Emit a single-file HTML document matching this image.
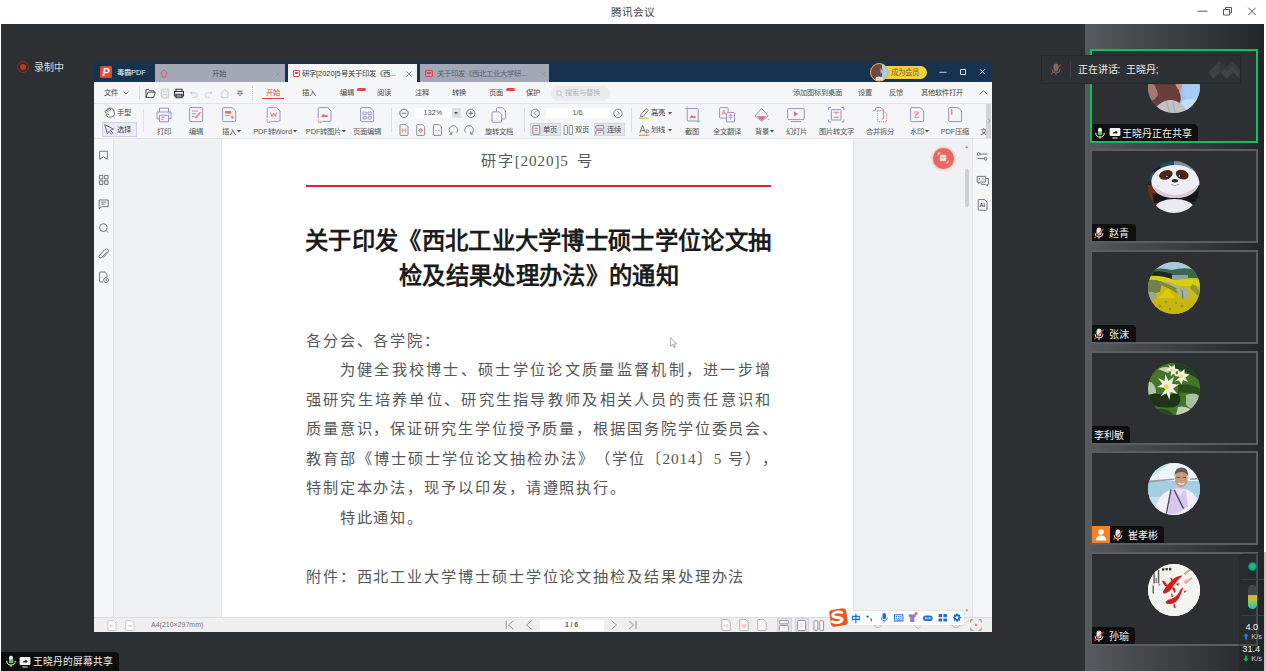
<!DOCTYPE html>
<html lang="zh-CN">
<head>
<meta charset="utf-8">
<title>腾讯会议</title>
<style>
html,body{margin:0;padding:0;}
body{width:1266px;height:671px;overflow:hidden;background:#fff;position:relative;font-family:"Liberation Sans",sans-serif;text-spacing-trim:space-all;}
.a{position:absolute;}
.t{position:absolute;white-space:nowrap;line-height:1;}
.m{position:absolute;white-space:nowrap;line-height:1;font-size:7.3px;color:#4a4a4a;top:89px;}
.l{position:absolute;white-space:nowrap;line-height:1;font-size:7.3px;color:#555;top:128px;text-align:center;}
.n{font-family:"Liberation Serif",serif;letter-spacing:0.85px;}
.dl{position:absolute;left:305px;width:466px;white-space:nowrap;line-height:1;font-family:"Liberation Sans",sans-serif;font-size:15.2px;letter-spacing:1.7px;color:#555;text-align:justify;text-align-last:justify;}
.tile{position:absolute;left:1090px;width:164px;height:90px;border:2px solid #5b5e61;background:#2d3033;}
.nm{position:absolute;left:0;bottom:0;height:17px;background:#0f0f0f;border-top-right-radius:4px;color:#f0f0f0;font-size:10px;line-height:19px;white-space:nowrap;}
svg{position:absolute;overflow:visible;}
</style>
</head>
<body>
<div class="t" style="left:611px;top:7px;font-size:10.7px;color:#444;">腾讯会议</div>
<svg style="left:1190px;top:0" width="76" height="24" viewBox="0 0 76 24"><g fill="none" stroke="#555" stroke-width="1"><path d="M7.5 11.2H17.5"/><path d="M33.5 9.5h6v5.5h-6z M35.5 9.5v-2h6v5.5h-2"/><path d="M58.3 7.7l7.4 7.4M65.7 7.7l-7.4 7.4"/></g></svg>
<div class="a" style="left:1px;top:24px;width:1263px;height:647px;background:#2d3033;"></div>
<div class="a" style="left:1085px;top:24px;width:179px;height:647px;background:linear-gradient(to right,#575a5e 0%,#494c4f 25%,#3d4043 50%,#303336 75%,#232629 100%);"></div>
<div class="a" style="left:17px;top:61px;width:10px;height:10px;border:1px solid #8a2c1f;border-radius:50%;"></div><div class="a" style="left:20px;top:64px;width:6px;height:6px;background:#c4381f;border-radius:50%;"></div><div class="t" style="left:33.5px;top:63px;font-size:10px;color:#dadada;">录制中</div>
<div class="a" style="left:94px;top:62px;width:898px;height:570px;background:#f5f6f7;"></div>
<div class="a" style="left:94px;top:62px;width:898px;height:20px;background:#17324f;"></div>
<div class="a" style="left:99.5px;top:66px;width:12px;height:12px;background:#e9463a;border-radius:1.5px;"></div><div class="t" style="left:102.5px;top:66.5px;font-size:10.5px;font-weight:bold;font-style:italic;color:#fff;">P</div><div class="t" style="left:117px;top:68.5px;font-size:7.4px;color:#f0f3f7;">毒霸PDF</div>
<div class="a" style="left:155px;top:64.2px;width:130px;height:17.8px;background:#a2a8b6;"></div><svg style="left:160px;top:69px" width="8" height="9" viewBox="0 0 8 9"><path d="M4 0.8L7.3 4.2H6V8H2V4.2H0.7Z" fill="none" stroke="#e0575a" stroke-width="0.9"/></svg><div class="t" style="left:211.5px;top:70px;font-size:7.4px;color:#4a5160;">开始</div><svg style="left:275px;top:71px" width="6" height="6" viewBox="0 0 6 6"><path d="M0.5 0.5l5 5M5.5 0.5l-5 5" stroke="#8f95a3" stroke-width="0.8"/></svg>
<div class="a" style="left:288px;top:64.2px;width:129px;height:17.8px;background:#f5f6f7;"></div><div class="a" style="left:292.5px;top:69.5px;width:7px;height:7px;border:1px solid #e0474b;border-radius:1px;box-sizing:border-box;"></div><div class="a" style="left:294.5px;top:71.8px;width:3.5px;height:2px;background:#e0474b;"></div><div class="t" style="left:302px;top:70px;font-size:7.4px;color:#333;">研字[2020]5号关于印发《西...</div><svg style="left:405.5px;top:71px" width="6" height="6" viewBox="0 0 6 6"><path d="M0.5 0.5l5 5M5.5 0.5l-5 5" stroke="#777" stroke-width="0.8"/></svg>
<div class="a" style="left:420px;top:64.2px;width:129px;height:17.8px;background:#a2a8b6;"></div><div class="a" style="left:425px;top:69.5px;width:7.5px;height:7px;border:1px solid #e0474b;border-radius:1px;box-sizing:border-box;"></div><div class="a" style="left:427px;top:71.8px;width:3.5px;height:2px;background:#e0474b;"></div><div class="t" style="left:437px;top:70px;font-size:7.4px;color:#5b6170;">关于印发《西北工业大学研...</div><svg style="left:539.5px;top:71px" width="6" height="6" viewBox="0 0 6 6"><path d="M0.5 0.5l5 5M5.5 0.5l-5 5" stroke="#8f95a3" stroke-width="0.8"/></svg>
<div class="a" style="left:880px;top:66px;width:46.5px;height:13px;background:#f7cf45;border-radius:6.5px;"></div><div class="t" style="left:891px;top:68.5px;font-size:7.5px;color:#8a5a10;">成为会员</div><svg style="left:870.3px;top:62.6px" width="18.6" height="18.6" viewBox="0 0 18.6 18.6"><defs><clipPath id="mb"><circle cx="9.3" cy="9.3" r="8.7"/></clipPath></defs><g clip-path="url(#mb)"><rect width="18.6" height="18.6" fill="#a9c9f0"/><path d="M0 0H11Q13 5 12 9Q12.500 13 11 18.600H0Z" fill="#6c4a43"/><path d="M10.500 5Q12.500 6 12 9.500L10.500 10.500Z" fill="#d9b3a3"/><path d="M6 14Q10 12.500 14 15V18.600H5Z" fill="#d8dbe2"/><path d="M12.500 2Q17 4 18.600 8V0H12Z" fill="#c7def6"/></g><circle cx="9.3" cy="9.3" r="8.800" fill="none" stroke="#e9b62f" stroke-width="1"/></svg><svg style="left:938px;top:66px" width="52" height="12" viewBox="0 0 52 12"><g fill="none" stroke="#dfe5ec" stroke-width="0.9"><path d="M1.5 6.3H8.5"/><path d="M22.5 3.5h5v5h-5z" stroke-width="1"/><path d="M42 3.2l5 5M47 3.2l-5 5" stroke-width="1"/></g></svg>
<div class="a" style="left:94px;top:103px;width:898px;height:1px;background:#e2e3e6;"></div>
<div class="m" style="left:104px;">文件</div><svg style="left:123px;top:91px" width="6" height="4" viewBox="0 0 6 4"><path d="M0.6 0.6L3 3L5.4 0.6" fill="none" stroke="#555" stroke-width="0.8"/></svg><div class="a" style="left:138.5px;top:86px;width:1px;height:14px;background:#dcdde0;"></div><svg style="left:145px;top:87.5px" width="100" height="11" viewBox="0 0 100 11"><g fill="none" stroke-width="0.9"><path d="M1 9.5V1.5H4L5 2.8H9V4.2M1 9.5L2.8 4.2H10.3L8.6 9.5Z" stroke="#444"/><path d="M16.5 1.2H23.5V9.8H16.5Z M18 1.2V4H22V1.2 M18 9.8V6.5H22V9.8" stroke="#c9cacd"/><path d="M31 3.5V1.2H37V3.5 M29.5 3.5H38.5V8H29.5Z M31 6.3H37V9.8H31Z" stroke="#333" stroke-width="1.1"/><path d="M47 3.2L45.5 5L47.5 6.3 M45.8 4.9H50.2A2.2 2.2 0 0 1 50.2 9.3H47.5" stroke="#c9cacd"/><path d="M65.5 3.2L67 5L65 6.3 M66.7 4.9H62.3A2.2 2.2 0 0 0 62.3 9.3H65" stroke="#c9cacd"/><path d="M75.5 5.5L79.8 1.5L84 5.5 M76.8 4.5V9.6H82.8V4.5" stroke="#c9cacd"/><path d="M92.5 3.2H97.5 M92.5 5L95 7.6L97.5 5Z" stroke="#555" stroke-width="0.8"/></g></svg><div class="a" style="left:251.5px;top:86px;width:1px;height:14px;border-left:1px dotted #cfd0d3;"></div>
<div class="m" style="left:265.5px;color:#e0474b;">开始</div><div class="a" style="left:262px;top:98.3px;width:21.5px;height:1.2px;background:#e0474b;"></div><div class="m" style="left:302px;">插入</div><div class="m" style="left:339.5px;">编辑</div><div class="a" style="left:357px;top:87.5px;width:9px;height:3.2px;background:#e8454b;border-radius:1.5px;"></div><div class="m" style="left:377px;">阅读</div><div class="m" style="left:414.5px;">注释</div><div class="m" style="left:451.5px;">转换</div><div class="m" style="left:488.5px;">页面</div><div class="a" style="left:506px;top:87.5px;width:9px;height:3.2px;background:#e8454b;border-radius:1.5px;"></div><div class="m" style="left:525.5px;">保护</div>
<div class="a" style="left:551px;top:85.5px;width:59px;height:15px;background:#ebecee;border-radius:7.5px;"></div><svg style="left:556px;top:89.5px" width="7" height="7" viewBox="0 0 7 7"><circle cx="3" cy="3" r="2.3" fill="none" stroke="#b9babd" stroke-width="0.8"/><path d="M4.7 4.7L6.5 6.5" stroke="#b9babd" stroke-width="0.8"/></svg><div class="m" style="left:565px;color:#b4b5b9;">搜索与替换</div>
<div class="m" style="left:793px;color:#555;">添加图标到桌面</div><div class="m" style="left:857.5px;color:#555;">设置</div><div class="m" style="left:888.5px;color:#555;">反馈</div><div class="m" style="left:921px;color:#444;">其他软件打开</div><svg style="left:979px;top:90px" width="9" height="5" viewBox="0 0 9 5"><path d="M0.7 4.3L4.5 0.8L8.3 4.3" fill="none" stroke="#555" stroke-width="0.9"/></svg>
<div class="a" style="left:94px;top:138px;width:898px;height:1px;background:#e4e5e8;"></div>
<svg style="left:103.5px;top:106.8px" width="11.5" height="11" viewBox="0 0 11.5 11"><path d="M2.600 6.200Q0.600 5.600 0.900 4.300Q1.300 3.200 2.800 3.700Q2.600 2.200 3.900 1.900Q4.600 0.700 5.900 1.200Q7.200 0.500 8 1.700Q9.600 2 9.700 3.600Q10.800 5.400 10.500 7.400Q10 9.800 7.400 10.100Q4.400 10.400 2.800 9.300Q1.600 8.400 2.600 7.400Q3.400 7 4.400 7.400 M2.800 3.700L4.200 4.600 M3.900 1.900L5.200 3.600 M5.900 1.200L6.600 3.200" fill="none" stroke="#555" stroke-width="0.800" stroke-linecap="round"/></svg><div class="t" style="left:117px;top:109.3px;font-size:7.3px;color:#444;">手型</div><div class="a" style="left:101.5px;top:122px;width:35.4px;height:14.6px;background:#ebecf4;border:1px solid #cfd1e6;box-sizing:border-box;"></div><svg style="left:104.3px;top:123.6px" width="10.5" height="11" viewBox="0 0 10.5 11"><path d="M0.800 0.700L9.400 5L6.300 6.200L8.800 9L7.400 10.200L4.900 7.400L3.300 9.800Z" fill="none" stroke="#555" stroke-width="0.8" stroke-linejoin="round"/></svg><div class="t" style="left:117px;top:126px;font-size:7.3px;color:#444;">选择</div><div class="a" style="left:142.5px;top:109px;width:1px;height:23px;background:#e1e2e7;"></div>
<svg style="left:155.5px;top:106.5px" width="16" height="16" viewBox="0 0 16 16"><g fill="none" stroke="#8d88c2" stroke-width="0.9"><path d="M3.5 5V1.2H12.5V5 M1 5H15V11.8H12.5 M3.5 11.8H1V5"/><path d="M3.5 8.3H12.5V14.8H3.5Z"/><path d="M5.5 10.3H8.5 M5.5 12.3H7.5" stroke="#ee6a6f"/><path d="M12.3 6.8H13.3" stroke="#8d88c2"/></g></svg><div class="l" style="left:123.5px;width:80px;color:#555;">打印</div><svg style="left:189px;top:106.5px" width="14.5" height="15.5" viewBox="0 0 14.5 15.5"><g fill="none" stroke="#8d88c2" stroke-width="0.9"><rect x="0.6" y="0.6" width="13" height="14" rx="1.2"/><path d="M3 4H9 M3 6.7H7 M3 9.4H5.5" stroke="#ee6a6f"/><path d="M6.5 11L11.5 5.2" stroke="#ee6a6f" stroke-width="1.3"/></g></svg><div class="l" style="left:156px;width:80px;color:#555;">编辑</div><svg style="left:222px;top:106.5px" width="14.5" height="15.5" viewBox="0 0 14.5 15.5"><g fill="none" stroke="#8d88c2" stroke-width="0.9"><path d="M0.6 1.8Q0.6 0.6 1.8 0.6H10L13.6 4V13.4Q13.6 14.6 12.4 14.6H1.8Q0.6 14.6 0.6 13.4Z"/><rect x="3" y="4" width="6" height="2.6" fill="#ee6a6f" stroke="none"/><path d="M3 8.6H7.5 M8.5 10.2H12 M10.2 8.4V12" stroke="#ee6a6f"/></g></svg><div class="l" style="left:191.5px;width:80px;color:#555;">插入<svg style="position:static;display:inline-block;vertical-align:1px;margin-left:0.8px" width="4" height="2.6" viewBox="0 0 4 2.6"><path d="M0 0H4L2 2.6Z" fill="#555"/></svg></div><svg style="left:265.5px;top:106.5px" width="15" height="16" viewBox="0 0 15 16"><g fill="none" stroke="#8d88c2" stroke-width="0.9"><path d="M1.2 11V1.8Q1.2 0.6 2.4 0.6H10.6L14 4V13.2Q14 14.4 12.8 14.4H5"/><path d="M4.5 5.5L6 9.5L7.6 6.2L9.2 9.5L10.7 5.5" stroke="#ee6a6f" stroke-width="1"/><path d="M1.2 12V15.2H4 M3 14.2L4.2 15.2L3 16.2" stroke="#ee6a6f" stroke-width="0.7"/></g></svg><div class="l" style="left:235px;width:80px;color:#555;">PDF转Word<svg style="position:static;display:inline-block;vertical-align:1px;margin-left:0.8px" width="4" height="2.6" viewBox="0 0 4 2.6"><path d="M0 0H4L2 2.6Z" fill="#555"/></svg></div><svg style="left:316.5px;top:106.5px" width="15" height="16" viewBox="0 0 15 16"><g fill="none" stroke="#8d88c2" stroke-width="0.9"><path d="M1.2 11V1.8Q1.2 0.6 2.4 0.6H10.6L14 4V13.2Q14 14.4 12.8 14.4H5"/><path d="M4 10L6.5 6.5L8.3 8.8L9.6 7.5L11.3 10Z" fill="#ee6a6f" stroke="none"/><path d="M1.2 12V15.2H4 M3 14.2L4.2 15.2L3 16.2" stroke="#ee6a6f" stroke-width="0.7"/></g></svg><div class="l" style="left:286px;width:80px;color:#555;">PDF转图片<svg style="position:static;display:inline-block;vertical-align:1px;margin-left:0.8px" width="4" height="2.6" viewBox="0 0 4 2.6"><path d="M0 0H4L2 2.6Z" fill="#555"/></svg></div><svg style="left:360px;top:106.5px" width="14.5" height="15.5" viewBox="0 0 14.5 15.5"><g fill="none" stroke="#8d88c2" stroke-width="0.9"><path d="M0.6 1.8Q0.6 0.6 1.8 0.6H10L13.6 4V13.4Q13.6 14.6 12.4 14.6H1.8Q0.6 14.6 0.6 13.4Z"/><path d="M3 5H6.2V7.6H3Z M8 5H11.2V7.6H8Z M3 9.4H6.2V12H3Z M8 9.4H11.2V12H8Z" stroke-width="0.8"/></g></svg><div class="l" style="left:327px;width:80px;color:#555;">页面编辑</div><div class="a" style="left:390.5px;top:108px;width:1px;height:24px;background:#dcdde1;"></div>
<svg style="left:399px;top:107.5px" width="78" height="11" viewBox="0 0 78 11"><g fill="none" stroke="#555" stroke-width="0.8"><circle cx="5" cy="5.3" r="4.2"/><path d="M2.8 5.3H7.2"/><circle cx="71.8" cy="5.3" r="4.2"/><path d="M69.6 5.3H74 M71.8 3.1V7.5"/></g></svg><div class="a" style="left:414.5px;top:107.5px;width:37.5px;height:10.5px;background:#fff;"></div><div class="a" style="left:452px;top:107.5px;width:8.5px;height:10.5px;background:#dfe0e4;"></div><div class="t" style="left:423.5px;top:109.3px;font-size:7.3px;color:#555;">132%</div><svg style="left:454.2px;top:111.6px" width="4" height="2.6" viewBox="0 0 4 2.6"><path d="M0 0H4L2 2.6Z" fill="#555"/></svg><svg style="left:399px;top:123.5px" width="78" height="12" viewBox="0 0 78 12"><g fill="none" stroke="#777" stroke-width="0.8"><path d="M1 1.2Q1 0.6 1.6 0.6H6.8L9 2.8V10.8Q9 11.4 8.4 11.4H1.6Q1 11.4 1 10.8Z"/><path d="M3.4 4.5V8.5 M6.6 4.5V8.5 M4.2 6.5H5.8" stroke="#ee6a6f"/><path d="M17.7 1.2Q17.7 0.6 18.3 0.6H23.5L25.7 2.8V10.8Q25.7 11.4 25.1 11.4H18.3Q17.7 11.4 17.7 10.8Z"/><circle cx="21.7" cy="6.5" r="1.6" stroke="#ee6a6f"/><path d="M21.7 4V9 M19.2 6.5H24.2" stroke="#ee6a6f" stroke-width="0.5"/><path d="M34.4 1.2Q34.4 0.6 35 0.6H40.2L42.4 2.8V10.8Q42.4 11.4 41.8 11.4H35Q34.4 11.4 34.4 10.8Z"/><path d="M36.2 6.5H37.6 M39.2 6.5H40.6" stroke="#ee6a6f"/><path d="M52.5 9.8A4.3 4.3 0 1 1 57.8 8.6 M52.8 7.6V10.2H50.4" stroke="#666"/><path d="M72 9.8A4.3 4.3 0 1 0 66.7 8.6 M71.7 7.6V10.2H74.1" stroke="#666"/></g></svg><svg style="left:491px;top:106.5px" width="15.5" height="16" viewBox="0 0 15.5 16"><g fill="none" stroke="#8d88c2" stroke-width="0.9"><path d="M5.5 4.5V1.8Q5.5 0.6 6.7 0.6H11.5L14.6 3.8V10.8Q14.6 12 13.4 12H11"/><path d="M1 6Q1 4.8 2.2 4.8H8L10.6 7.4V14Q10.6 15.2 9.4 15.2H2.2Q1 15.2 1 14Z"/></g></svg><div class="l" style="left:459px;width:80px;color:#555;">旋转文档</div><div class="a" style="left:524px;top:108px;width:1px;height:24px;background:#dcdde1;"></div>
<svg style="left:530px;top:107.5px" width="94" height="11" viewBox="0 0 94 11"><g fill="none" stroke="#666" stroke-width="0.8"><circle cx="5.2" cy="5.3" r="4.2"/><path d="M6 3.3L4 5.3L6 7.3"/><circle cx="88" cy="5.3" r="4.2"/><path d="M87.2 3.3L89.2 5.3L87.2 7.3"/></g></svg><div class="a" style="left:545.5px;top:107.5px;width:64px;height:10.5px;background:#fff;"></div><div class="t" style="left:545.5px;width:64px;text-align:center;top:109.3px;font-size:7.3px;color:#555;">1/6</div><div class="a" style="left:529.5px;top:122.5px;width:31px;height:13px;background:#e3e4ea;border:1px solid #d3d4dc;box-sizing:border-box;"></div><div class="a" style="left:593.5px;top:122.5px;width:31.5px;height:13px;background:#e3e4ea;border:1px solid #d3d4dc;box-sizing:border-box;"></div><svg style="left:532px;top:124.5px" width="74" height="10" viewBox="0 0 74 10"><g fill="none" stroke="#777" stroke-width="0.8"><rect x="0.8" y="0.6" width="7" height="8.8" rx="0.8"/><path d="M2.8 3.5H5.8 M2.8 5.5H5.8" stroke="#ee6a6f"/><rect x="32" y="0.6" width="3.4" height="8.8" rx="0.6"/><rect x="37.2" y="0.6" width="3.4" height="8.8" rx="0.6"/><rect x="63.8" y="0.6" width="8" height="3.4" rx="0.6"/><path d="M63.8 9.4V6.2Q63.8 5.6 64.4 5.6H71.2Q71.8 5.6 71.8 6.2V9.4"/><path d="M66 7.6H69" stroke="#ee6a6f"/></g></svg><div class="t" style="left:543px;top:126px;font-size:7.3px;color:#444;">单页</div><div class="t" style="left:575px;top:126px;font-size:7.3px;color:#444;">双页</div><div class="t" style="left:607px;top:126px;font-size:7.3px;color:#444;">连续</div><div class="a" style="left:631px;top:108px;width:1px;height:24px;background:#dcdde1;"></div>
<svg style="left:638px;top:106.5px" width="12" height="30" viewBox="0 0 12 30"><g fill="none" stroke="#555" stroke-width="0.8"><path d="M3 7.5L8 1.5L10.3 3.4L5.3 9.3L2.6 9.8Z"/><path d="M1 11.3H10.5" stroke="#e8cf3a" stroke-width="1.4"/><path d="M1.8 26L4.6 18.5L7.4 26 M2.8 23.6H6.4"/><path d="M8.6 26V22.6Q10.8 22.6 10.8 24.3Q10.8 26 8.6 26Z" stroke-width="0.7"/><path d="M1 28.3H11" stroke="#f0a12a" stroke-width="1.4"/></g></svg><div class="t" style="left:650.5px;top:109.3px;font-size:7.3px;color:#444;">高亮</div><svg style="left:667.5px;top:112px" width="4" height="2.6" viewBox="0 0 4 2.6"><path d="M0 0H4L2 2.6Z" fill="#555"/></svg><div class="t" style="left:650.5px;top:126px;font-size:7.3px;color:#444;">划线</div><svg style="left:667.5px;top:128.7px" width="4" height="2.6" viewBox="0 0 4 2.6"><path d="M0 0H4L2 2.6Z" fill="#555"/></svg><svg style="left:684.5px;top:105.5px" width="16" height="17" viewBox="0 0 16 17"><g fill="none" stroke="#8d88c2" stroke-width="0.9"><rect x="2.2" y="2.5" width="11" height="12.5" rx="1"/><path d="M0.4 2.5H2.2 M2.2 0.6V2.5 M13.2 15H15.2 M13.2 15V16.8" stroke-width="0.8"/><path d="M4.5 12L6.8 8.8L8.4 10.8L9.6 9.6L11.2 12Z" fill="#ee6a6f" stroke="none"/></g></svg><div class="l" style="left:652px;width:80px;color:#555;">截图</div><svg style="left:719px;top:106.5px" width="16.5" height="15.5" viewBox="0 0 16.5 15.5"><g fill="none" stroke="#8d88c2" stroke-width="0.9"><rect x="0.6" y="0.6" width="8.5" height="10.5" rx="1"/><path d="M3 8L4.8 3L6.6 8 M3.7 6.3H5.9" stroke="#ee6a6f" stroke-width="0.8"/><rect x="7.6" y="5.6" width="8" height="9.3" rx="1" fill="#f5f6f7"/><path d="M9.6 8.3H13.6 M9.6 10.3H13.6 M11.6 7V12.6" stroke-width="0.7"/></g></svg><div class="l" style="left:686.5px;width:80px;color:#555;">全文翻译</div><svg style="left:754px;top:106.5px" width="16" height="16" viewBox="0 0 16 16"><g fill="none" stroke="#8d88c2" stroke-width="0.9"><path d="M1 8.8L7.6 1.4L14.2 8.8L7.6 14.4Z"/><path d="M2.5 9.2L7.6 13.6L12.8 9.2Z" fill="#ee6a6f" stroke="none"/><path d="M14.3 11.2Q15.4 12.8 14.3 13.3Q13.2 12.8 14.3 11.2Z" fill="#ee6a6f" stroke="none"/></g></svg><div class="l" style="left:724.5px;width:80px;color:#555;">背景<svg style="position:static;display:inline-block;vertical-align:1px;margin-left:0.8px" width="4" height="2.6" viewBox="0 0 4 2.6"><path d="M0 0H4L2 2.6Z" fill="#555"/></svg></div><svg style="left:787px;top:107.5px" width="18" height="14.5" viewBox="0 0 18 14.5"><g fill="none" stroke="#8d88c2" stroke-width="0.9"><rect x="0.6" y="0.6" width="16.6" height="11" rx="1.2"/><path d="M7 3.6L11.2 6.1L7 8.6Z" fill="#ee6a6f" stroke="none"/><path d="M4 13.6H14"/></g></svg><div class="l" style="left:756px;width:80px;color:#555;">幻灯片</div><svg style="left:827.5px;top:106.5px" width="16.5" height="15.5" viewBox="0 0 16.5 15.5"><g fill="none" stroke="#8d88c2" stroke-width="0.9"><path d="M0.6 3V0.6H3 M13.5 0.6H15.9V3 M15.9 12.5V14.9H13.5 M3 14.9H0.6V12.5"/><rect x="3.4" y="2.6" width="9.6" height="10.4" rx="0.6"/><path d="M5.4 5.2H11 M8.2 5.2V7.6" stroke="#ee6a6f" stroke-width="0.8"/><path d="M5.2 10.2H11.2"/></g></svg><div class="l" style="left:796px;width:80px;color:#555;">图片转文字</div><svg style="left:872px;top:106.5px" width="15.5" height="15.5" viewBox="0 0 15.5 15.5"><g fill="none" stroke="#8d88c2" stroke-width="0.9"><path d="M3.4 3.4V1.6Q3.4 0.6 4.4 0.6H9L11.6 3.2V11Q11.6 12 10.6 12H9.8"/><path d="M5.6 3.6H11L14.6 6.8V13.8Q14.6 14.8 13.6 14.8H6.6Q5.6 14.8 5.6 13.8Z" stroke="#ee6a6f" stroke-dasharray="1.2 0.8"/><path d="M0.8 4.4Q0.8 3.4 1.8 3.4H3.4" /></g></svg><div class="l" style="left:839.5px;width:80px;color:#555;">合并拆分</div><svg style="left:910px;top:106.5px" width="14.5" height="15.5" viewBox="0 0 14.5 15.5"><g fill="none" stroke="#8d88c2" stroke-width="0.9"><path d="M0.6 1.8Q0.6 0.6 1.8 0.6H10L13.6 4V13.4Q13.6 14.6 12.4 14.6H1.8Q0.6 14.6 0.6 13.4Z"/><path d="M4 5H8.4L4.6 10.4H9.4 M5 7.8L8.6 6.6" stroke="#ee6a6f" stroke-width="0.8"/></g></svg><div class="l" style="left:879.5px;width:80px;color:#555;">水印<svg style="position:static;display:inline-block;vertical-align:1px;margin-left:0.8px" width="4" height="2.6" viewBox="0 0 4 2.6"><path d="M0 0H4L2 2.6Z" fill="#555"/></svg></div><svg style="left:948px;top:106.5px" width="14.5" height="15.5" viewBox="0 0 14.5 15.5"><g fill="none" stroke="#8d88c2" stroke-width="0.9"><path d="M0.6 1.8Q0.6 0.6 1.8 0.6H10L13.6 4V13.4Q13.6 14.6 12.4 14.6H1.8Q0.6 14.6 0.6 13.4Z"/><path d="M3.6 2.2V7.6 M2.6 3.4H4.6 M2.6 5.2H4.6 M2.6 7H4.6" stroke="#ee6a6f" stroke-width="0.8"/></g></svg><div class="l" style="left:915px;width:80px;color:#555;">PDF压缩</div><div class="t" style="left:980px;top:128px;font-size:7.3px;color:#555;width:5.5px;overflow:hidden;">文</div><div class="a" style="left:985.5px;top:104px;width:5.5px;height:34px;background:#d3d4d7;"></div><svg style="left:986.5px;top:117.5px" width="4" height="6" viewBox="0 0 4 6"><path d="M0.8 0.6L3.2 3L0.8 5.4" fill="none" stroke="#8a8b8f" stroke-width="0.7"/></svg>
<div class="a" style="left:113px;top:139px;width:859px;height:478px;background:#f0f1f3;"></div><div class="a" style="left:113px;top:139px;width:1px;height:478px;background:#e3e4e7;"></div><div class="a" style="left:972px;top:139px;width:1px;height:478px;background:#e3e4e7;"></div><div class="a" style="left:221px;top:139px;width:633px;height:478px;background:#fff;border-left:1px solid #e2e3e5;border-right:1px solid #e2e3e5;box-sizing:border-box;"></div>
<svg style="left:98px;top:150px" width="12" height="135" viewBox="0 0 12 135"><g fill="none" stroke="#555" stroke-width="0.8"><path d="M1.6 1.5H9.4V11L5.5 8L1.6 11Z" transform="translate(0,0) scale(1,0.85)"/><path d="M1.4 25.4H4.8V29H1.4Z M6.6 25.4H10V29H6.6Z M1.4 30.8H4.8V34.4H1.4Z M6.6 30.8H10V34.4H6.6Z"/><path d="M1.2 50H10.2V56.6H4L1.2 58.6Z M3.2 52.2H8.2 M3.2 54.2H6.6"/><circle cx="5.4" cy="77.6" r="3.9"/><path d="M8.2 80.4L10 82.4"/><path d="M9.6 101.4L4.6 106.8Q3.4 108 2.3 107Q1.3 105.9 2.4 104.7L7.4 99.3Q9.2 97.5 10.7 99Q12 100.5 10.3 102.300L5.600 107.400" transform="translate(-0.800,0.500)"/><path d="M1.6 122.6Q1.6 122 2.2 122H6.6L9 124.4V127 M1.6 122.6V131.4Q1.6 132 2.2 132H5"/><circle cx="8" cy="130" r="2.4"/><path d="M8 128.8V130.2H9"/></g></svg>
<div class="t" style="left:481.3px;top:152.8px;font-size:15.2px;letter-spacing:1.7px;word-spacing:2.5px;color:#555;">研字<span class="n">[2020]5</span> 号</div>
<div class="a" style="left:305.5px;top:185px;width:465.5px;height:2px;background:#e8212b;"></div>
<div style="position:absolute;white-space:nowrap;line-height:1;font-weight:bold;font-size:23.3px;color:#1c1c1c;text-align:justify;text-align-last:justify;left:305px;top:230px;width:466px;">关于印发《西北工业大学博士硕士学位论文抽</div>
<div style="position:absolute;white-space:nowrap;line-height:1;font-weight:bold;font-size:23.3px;color:#1c1c1c;text-align:justify;text-align-last:justify;left:399px;top:265px;width:279.6px;">检及结果处理办法》的通知</div>
<div class="dl" style="top:332.6px;left:305.8px;width:135.2px;">各分会、各学院：</div>
<div class="dl" style="top:362.15px;left:339.6px;width:432.2px;">为健全我校博士、硕士学位论文质量监督机制，进一步增</div>
<div class="dl" style="top:391.7px;left:305.8px;width:466px;">强研究生培养单位、研究生指导教师及相关人员的责任意识和</div>
<div class="dl" style="top:421.25px;left:305.8px;width:473.2px;">质量意识，保证研究生学位授予质量，根据国务院学位委员会、</div>
<div class="dl" style="top:450.8px;left:305.8px;width:473.2px;">教育部《博士硕士学位论文抽检办法》（学位〔<span class="n">2014</span>〕<span class="n">5</span> 号），</div>
<div class="dl" style="top:480.35px;left:305.8px;width:321.1px;">特制定本办法，现予以印发，请遵照执行。</div>
<div class="dl" style="top:509.9px;left:339.6px;width:84.5px;">特此通知。</div>
<div class="dl" style="top:569px;left:305.8px;width:439.4px;">附件：西北工业大学博士硕士学位论文抽检及结果处理办法</div>
<svg style="left:670px;top:337px" width="8" height="12" viewBox="0 0 8 12"><path d="M0.6 0.6V9.2L2.6 7.4L4 10.6L5.2 10L3.8 7H6.6Z" fill="#fff" stroke="#888" stroke-width="0.7"/></svg>
<div class="a" style="left:932.5px;top:147.5px;width:21px;height:21px;border-radius:50%;background:#e8685d;box-shadow:0 0 2px 1px rgba(232,104,93,0.35);"></div><svg style="left:937px;top:152px" width="12" height="12" viewBox="0 0 12 12"><g fill="none" stroke="#fbe3e0" stroke-width="0.8"><rect x="3.2" y="3.2" width="5.6" height="5.6" fill="#fbe3e0"/><path d="M4.6 5L6 6.6L7.4 5" stroke="#e8685d"/><path d="M1 3.4V1H3.4 M11 8.6V11H8.6"/></g></svg><div class="a" style="left:964.5px;top:168.5px;width:4.5px;height:38.5px;background:#cfcfd1;border-radius:2.2px;"></div><div class="t" style="left:964.6px;top:144.5px;font-size:4.5px;color:#999;">▲</div><div class="t" style="left:964.6px;top:609px;font-size:4.5px;color:#999;">▼</div>
<svg style="left:976px;top:150px" width="14" height="62" viewBox="0 0 14 62"><g fill="none" stroke="#555" stroke-width="0.8"><circle cx="2.6" cy="4" r="1.4"/><path d="M4 4H11.6"/><circle cx="9.6" cy="8.6" r="1.4"/><path d="M1.4 8.6H8.2"/><path d="M1.2 26.4H9.4V32H4.4L2.6 33.6V32H1.2Z"/><path d="M10.2 28.6H12.4V34.4H11.4V36L9.6 34.4H5.6V33"/><path d="M3.6 28V29.6 M6.8 28V29.6" stroke-width="0.9"/><path d="M2.2 50.2Q2.2 49.6 2.8 49.6H8.4L11 52.2V59.6Q11 60.2 10.4 60.2H2.8Q2.2 60.2 2.2 59.6Z"/></g></svg><div class="t" style="left:979.4px;top:203.2px;font-size:5.6px;font-weight:bold;color:#444;">Ai</div>
<div class="a" style="left:94px;top:616.5px;width:898px;height:15.5px;background:#efeff0;border-top:1px solid #dcdde0;box-sizing:border-box;"></div><svg style="left:107px;top:619.5px" width="30" height="11" viewBox="0 0 30 11"><g fill="none" stroke="#bbb" stroke-width="0.8"><path d="M0.8 1.2Q0.8 0.6 1.4 0.6H6.6L9 3V9.8Q9 10.4 8.4 10.4H1.4Q0.8 10.4 0.8 9.8Z" fill="#fff"/><path d="M3 6H6.6 M4 5L3 6L4 7"/><path d="M18.8 1.2Q18.8 0.6 19.4 0.6H24.6L27 3V9.8Q27 10.4 26.4 10.4H19.4Q18.8 10.4 18.8 9.8Z" fill="#fff"/><path d="M21 6H24.6 M23.6 5L24.6 6L23.6 7"/></g></svg><div class="t" style="left:151px;top:621.3px;font-size:7px;color:#777;">A4(210×297mm)</div>
<svg style="left:505px;top:620px" width="134" height="10" viewBox="0 0 134 10"><g fill="none" stroke="#8a8a8a" stroke-width="0.9"><path d="M1.2 0.8V9.2 M8.2 0.8L3.6 5L8.2 9.2"/><path d="M26.6 0.8L21.6 5L26.6 9.2"/><path d="M106.6 0.8L111.6 5L106.6 9.2"/><path d="M124 0.8L128.6 5L124 9.2 M131 0.8V9.2"/></g></svg><div class="a" style="left:539.5px;top:620px;width:64px;height:10.5px;background:#fff;"></div><div class="t" style="left:539.5px;width:64px;text-align:center;top:622px;font-size:6.8px;font-weight:bold;color:#555;">1 / 6</div>
<svg style="left:721px;top:619px" width="110" height="12" viewBox="0 0 110 12"><g fill="none" stroke="#9a9a9f" stroke-width="0.8"><path d="M0.8 1.2Q0.8 0.6 1.4 0.6H6.8L9.2 3V10.8Q9.2 11.4 8.6 11.4H1.4Q0.8 11.4 0.8 10.8Z" fill="#fff"/><path d="M3.4 5V8.6 M6.6 5V8.6 M4.2 6.8H5.8" stroke="#f0a0a3" stroke-width="0.7"/><path d="M18.8 1.2Q18.8 0.6 19.4 0.6H24.8L27.2 3V10.8Q27.2 11.4 26.6 11.4H19.4Q18.8 11.4 18.8 10.8Z" fill="#fff"/><circle cx="23" cy="6.8" r="1.7" stroke="#f0a0a3" stroke-width="0.7"/><path d="M23 4.4V9.2 M20.6 6.8H25.4" stroke="#f0a0a3" stroke-width="0.5"/><path d="M36.8 1.2Q36.8 0.6 37.4 0.6H42.8L45.2 3V10.8Q45.2 11.4 44.6 11.4H37.4Q36.8 11.4 36.8 10.8Z" fill="#fff"/><path d="M38.8 6.8H40.2 M41.8 6.8H43.2" stroke="#f0a0a3" stroke-width="0.7"/></g></svg><div class="a" style="left:776.5px;top:618px;width:15px;height:13.5px;background:#e4e5ea;border:1px solid #d2d3da;box-sizing:border-box;"></div><div class="a" style="left:794.5px;top:618px;width:14.5px;height:13.5px;background:#e4e5ea;border:1px solid #d2d3da;box-sizing:border-box;"></div><svg style="left:778px;top:619.5px" width="50" height="11" viewBox="0 0 50 11"><g fill="none" stroke="#808086" stroke-width="0.85"><rect x="1.4" y="0.6" width="9" height="3.2" rx="0.6" fill="#fff"/><path d="M1.4 10.4V6.2Q1.4 5.6 2 5.6H9.8Q10.4 5.6 10.4 6.2V10.4" fill="#fff"/><path d="M4.4 8H7.4" stroke="#f0a0a3"/><rect x="19.6" y="0.6" width="8" height="9.8" rx="0.8" fill="#fff"/><path d="M22 4H25.4 M22 6.2H25.4" stroke="#f0a0a3" stroke-width="0.7"/><rect x="36" y="0.8" width="3.8" height="9.6" rx="0.7" fill="#fff"/><rect x="41.8" y="0.8" width="3.8" height="9.6" rx="0.7" fill="#fff"/></g></svg>
<svg style="left:868px;top:617px" width="100" height="15" viewBox="0 0 100 15"><g fill="none" stroke="#a9a9ad" stroke-width="0.8"><circle cx="10" cy="6" r="4.6"/><path d="M47.6 9.6L50 11.6L52.4 9.6"/><circle cx="88" cy="6" r="4.6"/></g></svg><svg style="left:970px;top:619px" width="12" height="12" viewBox="0 0 12 12"><g fill="none" stroke="#777" stroke-width="0.8"><path d="M0.8 3.4V0.8H3.4 M8.6 0.8H11.2V3.4 M11.2 8.6V11.2H8.6 M3.4 11.2H0.8V8.6"/><circle cx="6" cy="6" r="0.9" fill="#e8454b" stroke="none"/></g></svg>
<div class="a" style="left:846px;top:610.7px;width:117.5px;height:14.3px;background:#fdfdfe;border-radius:2px;box-shadow:0 0 1.5px rgba(0,0,0,0.25);"></div><div class="a" style="left:829.5px;top:608.8px;width:17px;height:16.5px;background:#f0551f;border-radius:3px;transform:rotate(-9deg);"></div><svg style="left:829px;top:608.5px" width="17" height="16.5" viewBox="0 0 17 16.5"><path d="M13.6 4.200Q9 1.800 5.200 3.800Q2.600 5.600 5.400 7.400Q8.200 8.600 11.400 9.400Q14.400 10.800 11.600 12.800Q7.400 14.600 2.800 11.800" fill="none" stroke="#fff" stroke-width="2.700" stroke-linecap="round" transform="rotate(-9 8.500 8.250)"/></svg><div class="t" style="left:850.5px;top:613.6px;font-size:9.5px;font-weight:bold;color:#1e6fd9;">中</div><svg style="left:864px;top:612.4px" width="98" height="12" viewBox="0 0 98 12"><g fill="#1e6fd9" stroke="none"><circle cx="3.6" cy="4.6" r="1.2"/><path d="M6.6 6.2Q8.6 6.8 7.8 9.4L6.8 9Q7.2 7.6 6.2 7.4Z"/><rect x="18.4" y="1" width="3.6" height="6.4" rx="1.8"/><path d="M16.8 5.6Q16.8 9 20.2 9Q23.6 9 23.6 5.6H22.8Q22.8 8.2 20.2 8.2Q17.6 8.2 17.6 5.6Z M19.8 9H20.6V10.6H19.8Z"/><path d="M30 2.2H39.4V9.6H30Z M31 3.2V8.6H38.4V3.2Z M31.8 4H33V5H31.8Z M34 4H35.2V5H34Z M36.2 4H37.4V5H36.2Z M31.8 5.8H33V6.8H31.8Z M34 5.8H35.2V6.8H34Z M36.2 5.8H37.4V6.8H36.2Z M32.6 7.4H36.8V8.2H32.6Z"/><path d="M44.4 3L47 2Q48.2 3.6 49.6 2L52.2 3L51.4 5.4L50.4 5V10H46.2V5L45.2 5.4Z" fill="#8d7bd6"/><circle cx="52" cy="1.6" r="1.3" fill="#f0551f"/><rect x="59" y="3.4" width="9.6" height="5.6" rx="2.8"/><path d="M61.2 5.2H62.4V7.2H61.2Z M65.2 5.2H66.4V7.2H65.2Z M62.6 5.8H65V6.6H62.6Z" fill="#fff"/><path d="M74.6 2H78.2V5.2H74.6Z M79.4 2H83V5.2H79.4Z M74.6 6.4H78.2V9.6H74.6Z M79.4 6.4H83V9.6H79.4Z"/><path d="M93 1L94.2 2.6L96.2 2.4L96 4.4L97.6 5.6L96 6.8L96.2 8.8L94.2 8.6L93 10.2L91.8 8.6L89.8 8.8L90 6.8L88.4 5.6L90 4.4L89.8 2.4L91.8 2.6Z"/><circle cx="93" cy="5.6" r="1.4" fill="#fff"/></g></svg>
<div class="tile" style="top:49px;border-color:#0bc15f;"><svg style="left:56.2px;top:9.5px" width="52" height="52" viewBox="0 0 52 52"><defs><clipPath id="c1"><circle cx="26" cy="26" r="26"/></clipPath><filter id="b1" x="-10%" y="-10%" width="120%" height="120%"><feGaussianBlur stdDeviation="0.7"/></filter></defs><g clip-path="url(#c1)"><rect width="52" height="52" fill="#8c86a0"/><g filter="url(#b1)"><rect width="52" height="52" fill="#9cc3f2"/><path d="M32 20Q40 30 34 52H52V20Z" fill="#a4ccf6"/><path d="M34 40Q44 36 52 40V52H30Z" fill="#bfe0f8"/><path d="M0 0H30Q36 22 31 30Q35 38 30 46L8 48L0 40Z" fill="#6b3d39"/><path d="M0 20Q8 22 10 34Q6 40 2 40L0 36Z" fill="#a47a6e"/><path d="M26 20H34Q35 26 32 31Q28 26 26 20Z" fill="#c79488"/><path d="M8 46Q16 38 24 39Q32 40 38 48L36 52H12Z" fill="#c3c3c7"/><path d="M18 40L22 52M25 40L27 52" stroke="#aeaeb4" stroke-width="1.5"/></g></g></svg><div class="nm" style="width:106px;border-top-right-radius:5px;"><svg style="left:2px;top:2.5px" width="12" height="13" viewBox="0 0 12 13"><g fill="none" stroke="#f2f2f2" stroke-width="1"><rect x="4" y="0.8" width="4" height="7.4" rx="2" fill="#f2f2f2" stroke="none"/><path d="M4 4.2H8V6.2Q8 8.2 6 8.2Q4 8.2 4 6.2Z" fill="#3fe03a" stroke="none"/><path d="M1.8 5.8Q1.8 10 6 10Q10.2 10 10.2 5.8 M6 10V12"/></g></svg><svg style="left:16.5px;top:3px" width="12" height="12" viewBox="0 0 12 12"><rect x="0.6" y="1" width="10.8" height="8" rx="1.2" fill="#f4f4f4"/><path d="M3.4 11H8.6" stroke="#f4f4f4" stroke-width="1"/><path d="M3.6 6.6Q4.4 4.6 6.6 4.6V3.6L8.8 5.4L6.6 7.2V6.2Q5 6.2 3.6 6.6Z" fill="#222"/></svg><span style="position:absolute;left:30px;top:0;font-size:10px;">王晓丹正在共享</span></div></div>
<div class="tile" style="top:149px;"><svg style="left:56.2px;top:9.5px" width="52" height="52" viewBox="0 0 52 52"><defs><clipPath id="c2"><circle cx="26" cy="26" r="26"/></clipPath><filter id="b2" x="-10%" y="-10%" width="120%" height="120%"><feGaussianBlur stdDeviation="0.7"/></filter></defs><g clip-path="url(#c2)"><rect width="52" height="52" fill="#3a3538"/><g filter="url(#b2)"><rect width="52" height="52" fill="#20262c"/><path d="M0 0H26V20H0Z" fill="#1f4962"/><path d="M26 0H52V24H26Z" fill="#7f909e"/><path d="M0 24H22V46H0Z" fill="#66301f"/><path d="M4 32Q26 36 50 30L52 40Q30 44 6 42Z" fill="#19191c"/><circle cx="9" cy="8" r="4" fill="#222"/><ellipse cx="27.3" cy="20.5" rx="24" ry="16.5" fill="#efeff3"/><path d="M4 24Q27 44 50 24Q46 37 27.3 37Q8 37 4 24Z" fill="#d9c9d6"/><ellipse cx="17.9" cy="13.8" rx="7" ry="4.6" fill="#4d2519" transform="rotate(-18 17.9 13.8)"/><ellipse cx="34.2" cy="13.6" rx="6.6" ry="4.6" fill="#4d2519" transform="rotate(18 34.2 13.6)"/><circle cx="19.8" cy="16" r="1.9" fill="#1d1d20"/><circle cx="32.2" cy="15.6" r="1.9" fill="#1d1d20"/><circle cx="19" cy="15.400" r="0.700" fill="#fff"/><circle cx="31.400" cy="15" r="0.700" fill="#fff"/><ellipse cx="26.9" cy="19.8" rx="3.2" ry="1.7" fill="#2a2a30"/><path d="M23 23.500Q27 25.500 31 23.500" stroke="#a08f98" stroke-width="0.800" fill="none"/><ellipse cx="26.4" cy="46.5" rx="19" ry="8.500" fill="#ececf0"/></g></g></svg><div class="nm" style="width:44px;"><svg style="left:1.2px;top:2.8px" width="12" height="13" viewBox="0 0 12 13"><g fill="none" stroke="#e8e8e8" stroke-width="1"><rect x="4" y="1" width="4" height="7" rx="2" fill="#e8e8e8"/><path d="M2 6.2Q2 10 6 10Q10 10 10 6.2 M6 10V12"/></g><path d="M1.4 11.2L10.6 1.6" stroke="#e8452f" stroke-width="1.2"/></svg><span style="position:absolute;left:17px;top:0;">赵青</span></div></div>
<div class="tile" style="top:250px;"><svg style="left:56.2px;top:9.5px" width="52" height="52" viewBox="0 0 52 52"><defs><clipPath id="c3"><circle cx="26" cy="26" r="26"/></clipPath><filter id="b3" x="-10%" y="-10%" width="120%" height="120%"><feGaussianBlur stdDeviation="0.7"/></filter></defs><g clip-path="url(#c3)"><rect width="52" height="52" fill="#c2b31a"/><g filter="url(#b3)"><rect width="52" height="52" fill="#cbbb0e"/><path d="M0 0H52V9H0Z" fill="#a9c9de"/><path d="M0 8Q12 5 24 8Q38 4 52 9V16H0Z" fill="#3b6650"/><path d="M2 10Q14 8 24 12L26 18L4 15Z" fill="#1c2a1b"/><path d="M24 13H40V18H24Z" fill="#8da3a2"/><path d="M0 14Q14 13 26 18Q40 16 52 18V24H0Z" fill="#d7cf12"/><path d="M0 18Q8 17 14 20L12 30Q6 32 0 30Z" fill="#70814f"/><path d="M0 30Q6 29 9 34L6 40L0 38Z" fill="#9ba890"/><path d="M12 19Q24 22 40 34L36 36Q22 26 10 22Z" fill="#7c8b3c"/><path d="M16 19Q28 21 42 31L41 32.500Q28 23 16 20.500Z" fill="#aab39a"/><path d="M28 27L38 25L42 36L32 38Z" fill="#a9b19b"/><path d="M34 28L35 37" stroke="#6f7f45" stroke-width="1.200"/><path d="M10 36L20 26L27 37Z" fill="#dacc10"/><path d="M44 22Q50 24 52 30V36Q46 30 42 26Z" fill="#8c9642"/><path d="M0 38Q26 34 52 38V52H0Z" fill="#c6b60a"/><g fill="#8a8410" opacity="0.600"><circle cx="12" cy="44" r="1.500"/><circle cx="22" cy="47" r="1.400"/><circle cx="34" cy="44" r="1.600"/><circle cx="42" cy="47" r="1.300"/><circle cx="28" cy="41" r="1.200"/><circle cx="18" cy="40" r="1"/></g></g></g></svg><div class="nm" style="width:44px;"><svg style="left:1.2px;top:2.8px" width="12" height="13" viewBox="0 0 12 13"><g fill="none" stroke="#e8e8e8" stroke-width="1"><rect x="4" y="1" width="4" height="7" rx="2" fill="#e8e8e8"/><path d="M2 6.2Q2 10 6 10Q10 10 10 6.2 M6 10V12"/></g><path d="M1.4 11.2L10.6 1.6" stroke="#e8452f" stroke-width="1.2"/></svg><span style="position:absolute;left:17px;top:0;">张沫</span></div></div>
<div class="tile" style="top:351px;"><svg style="left:56.2px;top:9.5px" width="52" height="52" viewBox="0 0 52 52"><defs><clipPath id="c4"><circle cx="26" cy="26" r="26"/></clipPath><filter id="b4" x="-10%" y="-10%" width="120%" height="120%"><feGaussianBlur stdDeviation="0.7"/></filter></defs><g clip-path="url(#c4)"><rect width="52" height="52" fill="#3f6e2a"/><g filter="url(#b4)"><rect width="52" height="52" fill="#44752a"/><path d="M26 0H52V18Q40 8 26 6Z" fill="#21401a"/><path d="M0 28Q14 34 30 30Q36 40 26 44Q10 46 0 40Z" fill="#1c3414"/><path d="M30 22Q44 20 52 26V34Q40 28 30 30Z" fill="#2b4f1c"/><path d="M0 18Q8 20 8 30L0 32Z" fill="#b3c6aa"/><path d="M38 32Q48 28 52 34V46Q44 48 38 42Z" fill="#a9c19f"/><path d="M30 44Q40 42 46 50L44 52H28Z" fill="#bfd0b4"/><path d="M10 6Q18 2 24 6L20 10Z" fill="#c3d3b7"/><path d="M8 46Q18 44 26 52H8Z" fill="#2a4a1b"/><g fill="#f3f1df"><path d="M18.300 25L9 24L14.500 21L10 15L16.500 18L17.500 11.500L20.500 18L26 13.500L24 21L31 21.500L25 25.500L29.500 31L22.500 29L21.500 37L18.500 30L12.500 33.500Z"/><path d="M23.200 8.500L18 7L21.500 5L20.500 1.500L24 4L27 1L27 5.500L31 6.500L27.500 9L29 13L25 11L22.500 13.500Z"/><path d="M32.200 13.800L26 13L30 10.500L29 6.500L33 9L36.500 6L36.500 10.500L41.500 11.500L37.500 14.500L40 19L35 17L33.500 21.500L31 17.500L26.500 18.500Z"/></g><circle cx="18.300" cy="24" r="2.500" fill="#f0d53a"/><circle cx="24" cy="7.500" r="1.700" fill="#ece27a"/><circle cx="33.200" cy="13.200" r="1.900" fill="#ece27a"/></g></g></svg><div class="nm" style="width:38px;"><span style="position:absolute;left:2px;top:0;">李利敏</span></div></div>
<div class="tile" style="top:451px;"><svg style="left:56.2px;top:9.5px" width="52" height="52" viewBox="0 0 52 52"><defs><clipPath id="c5"><circle cx="26" cy="26" r="26"/></clipPath><filter id="b5" x="-10%" y="-10%" width="120%" height="120%"><feGaussianBlur stdDeviation="0.7"/></filter></defs><g clip-path="url(#c5)"><rect width="52" height="52" fill="#cfe0ec"/><g filter="url(#b5)"><rect width="52" height="52" fill="#eef4f8"/><path d="M0 0H22Q14 8 0 16Z" fill="#c6e5f5"/><path d="M0 18H52V36H0Z" fill="#a3cfe0"/><path d="M0 34H52V52H0Z" fill="#c5dfea"/><path d="M1 17.500L26 15.500V17L1 19.500Z M42 15.500L52 14.500V16.500L42 17Z" fill="#9aa1a9"/><path d="M7 52Q8 32 22 27L30 25L40 27Q50 32 51 44L46 52Z" fill="#f3effa"/><path d="M22 27L30 25L38 28L40 44L30 50L20 52L21 36Z" fill="#d7c6ef"/><path d="M27 26L32 33L36 27Z" fill="#e9e0f6"/><path d="M23 26.400L18.100 52 M26.200 27L35.500 45.600" stroke="#494955" stroke-width="1.300" fill="none"/><ellipse cx="33.300" cy="15.800" rx="6.600" ry="8.400" fill="#c99b7c"/><path d="M26.500 13Q26.500 4.500 33.500 4.500Q40.500 4.500 40.200 13Q37 8.500 33 9Q28.500 9 26.500 13Z" fill="#5c5c60"/><path d="M28.500 14.500H32 M34.500 14.500H38" stroke="#5a4a48" stroke-width="0.900"/><path d="M30.500 20Q33.500 22.500 36.500 20" stroke="#f6eeee" stroke-width="1.100" fill="none"/></g></g></svg><div class="nm" style="width:72px;"><div style="position:absolute;left:0;top:0;width:18px;height:17px;background:#f5821f;"></div><svg style="left:3px;top:2px" width="12" height="13" viewBox="0 0 12 13"><circle cx="6" cy="4" r="2.800" fill="#fff"/><path d="M0.800 12.500Q0.800 7.500 6 7.500Q11.200 7.500 11.200 12.500Z" fill="#fff"/></svg><svg style="left:20px;top:2.8px" width="12" height="13" viewBox="0 0 12 13"><g fill="none" stroke="#e8e8e8" stroke-width="1"><rect x="4" y="1" width="4" height="7" rx="2" fill="#e8e8e8"/><path d="M2 6.2Q2 10 6 10Q10 10 10 6.2 M6 10V12"/></g><path d="M1.4 11.2L10.6 1.6" stroke="#e8452f" stroke-width="1.2"/></svg><span style="position:absolute;left:36px;top:0;">崔孝彬</span></div></div>
<div class="tile" style="top:552px;"><svg style="left:56.2px;top:9.5px" width="52" height="52" viewBox="0 0 52 52"><defs><clipPath id="c6"><circle cx="26" cy="26" r="26"/></clipPath><filter id="b6" x="-10%" y="-10%" width="120%" height="120%"><feGaussianBlur stdDeviation="0.7"/></filter></defs><g clip-path="url(#c6)"><rect width="52" height="52" fill="#f3f5f1"/><g filter="url(#b6)"><rect width="52" height="52" fill="#f3f5f1"/><g fill="#d61e1c"><path d="M34.500 11.600Q28 12 23 17Q18 22 15.500 26.500Q14 30 17 29.500Q21 28.500 24 24Q27 19 34.500 11.600Z"/><path d="M14 17Q16 16 18 19L19.500 22L17 22Q15 20 14 17Z"/><path d="M25 15L22 13.500L23.500 17Z M28 20L31.500 19L30 22Z"/><path d="M35.400 23.200Q33 24 30 30Q27 34 23 35Q18 36 17.500 38.500Q18 40.500 23 40Q28 39 31 34Q34 28 35.400 23.200Z"/><path d="M25 23Q28 24 27.500 28L26 29Q26 26 24 24.500Z"/><path d="M26 39Q28 41 27.500 44Q26 45 25.500 42Z"/><path d="M23 29Q25 30 25 33L23.500 33Z"/><path d="M36 27L39 26.500L36.500 29Z"/></g><g fill="#ef9a9c"><path d="M42 4.500Q38 7 35.500 10L37 11Q40 8 43.500 6Z"/><path d="M44 13Q39 15 36.500 19.500L38 20Q40.500 17 44.500 14.500Z"/><path d="M39.500 14.500Q37 16 35.500 18.500L36.500 19Z"/></g><g fill="#303030"><rect x="14" y="4.300" width="2.300" height="2.300"/><rect x="17.500" y="4" width="2.300" height="2.300"/><rect x="21" y="3.800" width="2.300" height="2.600"/><rect x="9.800" y="5.500" width="1.500" height="14" opacity="0.750"/><rect x="5.300" y="8.500" width="1.500" height="11" opacity="0.750"/><rect x="7.500" y="14" width="1.400" height="5" opacity="0.600"/><rect x="4.500" y="21.500" width="1.400" height="8" opacity="0.750"/></g><rect x="10.800" y="20" width="1.400" height="1.600" fill="#d61e1c" opacity="0.700"/></g></g></svg><div class="nm" style="width:43px;"><svg style="left:1.2px;top:2.8px" width="12" height="13" viewBox="0 0 12 13"><g fill="none" stroke="#e8e8e8" stroke-width="1"><rect x="4" y="1" width="4" height="7" rx="2" fill="#e8e8e8"/><path d="M2 6.2Q2 10 6 10Q10 10 10 6.2 M6 10V12"/></g><path d="M1.4 11.2L10.6 1.6" stroke="#e8452f" stroke-width="1.2"/></svg><span style="position:absolute;left:17px;top:0;">孙瑜</span></div></div>
<div class="a" style="left:1041px;top:55px;width:200px;height:29px;background:#2e3134;border:1px solid #25282a;box-sizing:border-box;"></div><svg style="left:1050px;top:63px" width="12" height="13" viewBox="0 0 12 13"><g fill="none" stroke="#6c6f72" stroke-width="1"><rect x="4" y="1" width="4" height="7" rx="2" fill="#6c6f72"/><path d="M2 6.2Q2 10 6 10Q10 10 10 6.200 M6 10V12"/></g><path d="M1.200 11.400L10.800 1.400" stroke="#c9402e" stroke-width="1.100"/></svg><div class="a" style="left:1070px;top:61px;width:1px;height:17px;background:#3d4043;"></div><div class="t" style="left:1077.500px;top:64.500px;font-size:10px;color:#ececec;">正在讲话:&nbsp; 王晓丹;</div><svg style="left:1207px;top:59px" width="34" height="21" viewBox="0 0 34 21"><path d="M12.800 1.400L1.300 13.500L6.500 19.800L13.500 13L18.500 7.500Z" fill="#3e4144"/><path d="M12.800 1.400L18.500 7.500L13.500 13L12.600 8Z" fill="#35383b"/><path d="M25.400 3.100L13.500 13.300L19.500 19.800L26 13.500L32.600 19.400L32.600 11Z" fill="#414447"/><path d="M25.400 3.100L32.600 11L32.600 14.500L25.400 7.500L19 12.500L16.800 10.500Z" fill="#393c3f"/></svg>
<div class="a" style="left:1px;top:651.500px;width:118px;height:19.500px;background:#0e0e0e;border-top-right-radius:4px;"></div><svg style="left:4.5px;top:655px" width="12" height="13" viewBox="0 0 12 13"><g fill="none" stroke="#f2f2f2" stroke-width="1"><rect x="4" y="0.8" width="4" height="7.4" rx="2" fill="#f2f2f2" stroke="none"/><path d="M4 4.2H8V6.2Q8 8.2 6 8.2Q4 8.2 4 6.2Z" fill="#3fe03a" stroke="none"/><path d="M1.8 5.8Q1.8 10 6 10Q10.2 10 10.2 5.8 M6 10V12"/></g></svg><svg style="left:19px;top:655.5px" width="12" height="12" viewBox="0 0 12 12"><rect x="0.6" y="1" width="10.8" height="8" rx="1.2" fill="#f4f4f4"/><path d="M3.4 11H8.6" stroke="#f4f4f4" stroke-width="1"/><path d="M3.6 6.6Q4.4 4.6 6.6 4.6V3.6L8.8 5.4L6.6 7.2V6.2Q5 6.2 3.6 6.6Z" fill="#222"/></svg><div class="t" style="left:33px;top:656.500px;font-size:9.800px;color:#f0f0f0;">王晓丹的屏幕共享</div>
<div class="a" style="left:1239px;top:553px;width:25px;height:118px;background:rgba(30,32,35,0.30);border-top-left-radius:6px;"></div><div class="a" style="left:1264px;top:552px;width:2px;height:119px;background:#c6c6c6;"></div><div class="a" style="left:1247.500px;top:561.500px;width:9px;height:9px;border-radius:50%;background:#0bc46a;border:0.500px solid #1d5fb0;box-sizing:border-box;"></div><div class="a" style="left:1241px;top:579px;width:23px;height:0.600px;background:#3a3d40;"></div><div class="a" style="left:1241px;top:615px;width:23px;height:0.600px;background:#3a3d40;"></div><div class="a" style="left:1248px;top:585px;width:8.500px;height:24px;border-radius:4.200px;background:linear-gradient(to bottom,#44474a 0,#44474a 42%,#d9b416 43%,#c8c232 60%,#5ec98a 80%,#2fb3b6 100%);"></div><div class="t" style="left:1236px;width:22.2px;text-align:right;top:622.5px;font-size:9.200px;color:#f4f4f4;">4.0</div><div class="t" style="left:1236px;width:26px;text-align:right;top:632.5px;font-size:7.500px;color:#c9c9c9;">K/s</div><svg style="left:1243px;top:632.500px" width="6" height="7" viewBox="0 0 6 7"><path d="M3 0.300L5.800 3.300H4V6.600H2V3.300H0.200Z" fill="#1e7fe8"/></svg><div class="t" style="left:1236px;width:24.2px;text-align:right;top:645px;font-size:9.200px;color:#f4f4f4;">31.4</div><div class="t" style="left:1236px;width:26px;text-align:right;top:654.500px;font-size:7.500px;color:#c9c9c9;">K/s</div><svg style="left:1243px;top:655px" width="6" height="7" viewBox="0 0 6 7"><path d="M3 6.700L5.800 3.700H4V0.400H2V3.700H0.200Z" fill="#12b25a"/></svg>
</body>
</html>
